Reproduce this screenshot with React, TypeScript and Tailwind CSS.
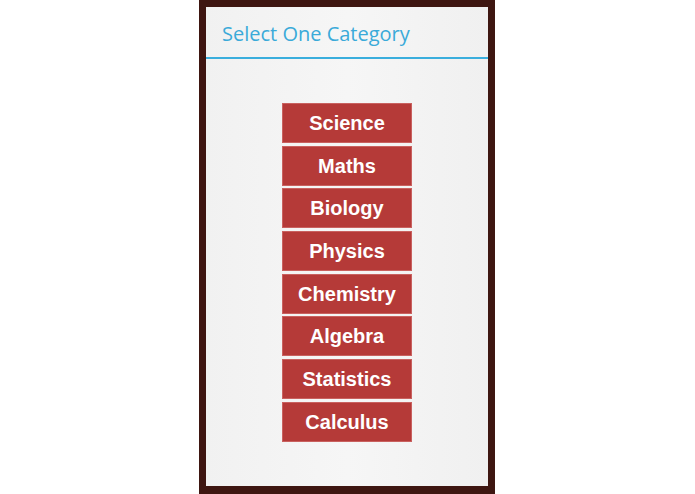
import React from "react";

const categories = [
  "Science",
  "Maths",
  "Biology",
  "Physics",
  "Chemistry",
  "Algebra",
  "Statistics",
  "Calculus",
];

export default function App() {
  return (
    <div className="w-[695px] h-[494px] bg-white flex pl-[199px]">
      <div className="w-[296px] h-full bg-[#3e1611] pt-[7px] px-[7px] pb-[8px]">
        <div className="h-full flex flex-col bg-gradient-to-r from-[#f1f1f1] via-[#f6f6f6] to-[#f0f0f0]">
          <div className="h-[52px] flex items-center pl-[16px] pt-[4px] border-b-2 border-[#3aaedd]">
            <h1 className="text-[20px] text-[#3aaad9] font-['Open_Sans',sans-serif]">
              Select One Category
            </h1>
          </div>
          <div className="flex flex-col items-center pt-[44px] gap-[2.7px]">
            {categories.map((c) => (
              <button
                key={c}
                className="w-[130px] h-[40px] bg-[#b53a38] border border-[#c9615f] text-white text-[20px] font-bold font-['Liberation_Sans',Arial,sans-serif] flex items-center justify-center"
              >
                {c}
              </button>
            ))}
          </div>
        </div>
      </div>
    </div>
  );
}
